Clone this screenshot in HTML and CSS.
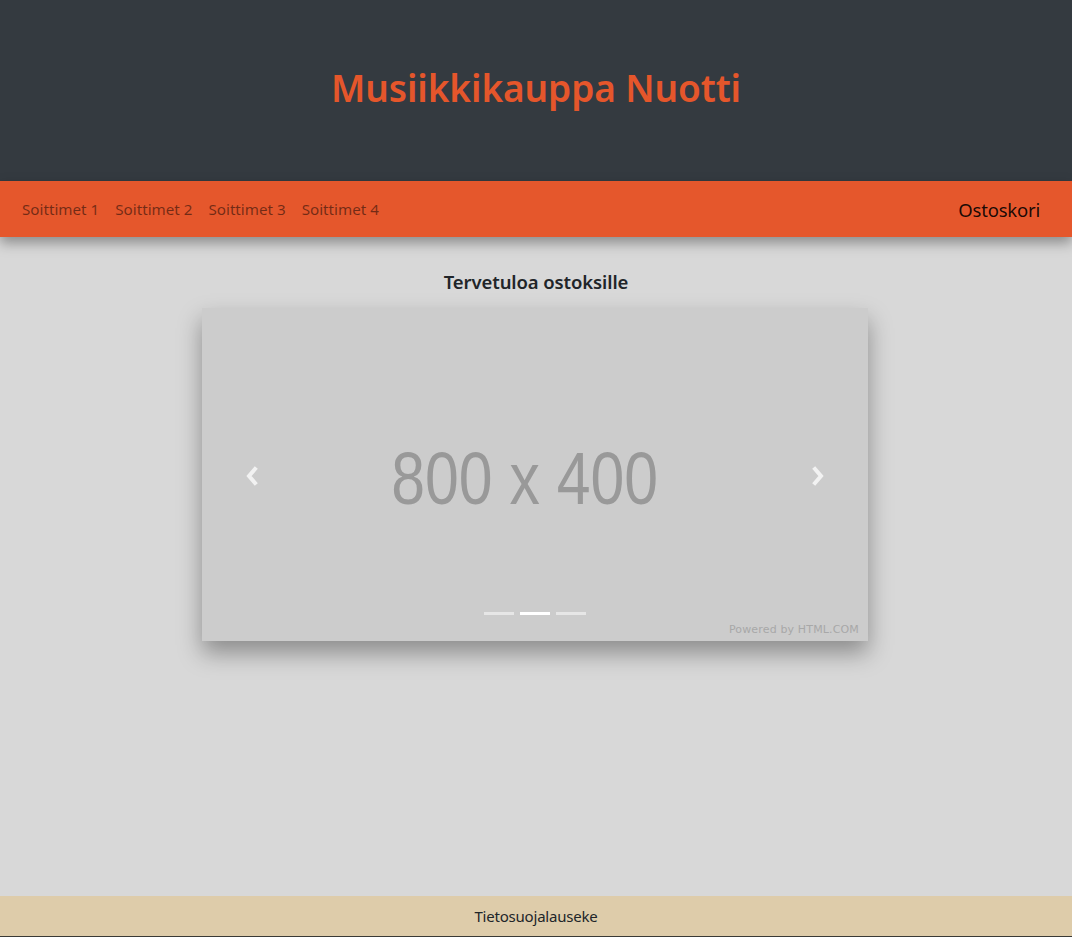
FILE: index.html
```html
<!DOCTYPE html>
<html lang="fi">
<head>
<meta charset="utf-8">
<title>Musiikkikauppa Nuotti</title>
<link rel="stylesheet" href="styles.css">
</head>
<body>
<header class="masthead">
  <h1 class="site-title">Musiikkikauppa Nuotti</h1>
</header>
<nav class="navbar">
  <ul class="nav-links">
    <li><a class="nav-link" href="#">Soittimet 1</a></li>
    <li><a class="nav-link" href="#">Soittimet 2</a></li>
    <li><a class="nav-link" href="#">Soittimet 3</a></li>
    <li><a class="nav-link" href="#">Soittimet 4</a></li>
  </ul>
  <a class="cart" href="#">Ostoskori</a>
</nav>
<main class="content">
  <h2 class="welcome">Tervetuloa ostoksille</h2>
  <div class="carousel">
    <div class="slide">
      <span class="placeholder">800 x 400</span>
    </div>
    <a class="control prev" href="#" aria-label="Edellinen">
      <svg width="14" height="20" viewBox="0 0 14 20"><path d="M10 3 L4 10 L10 17" fill="none" stroke="#f2f2f2" stroke-width="4" stroke-linecap="square"/></svg>
    </a>
    <a class="control next" href="#" aria-label="Seuraava">
      <svg width="14" height="20" viewBox="0 0 14 20"><path d="M4 3 L10 10 L4 17" fill="none" stroke="#f2f2f2" stroke-width="4" stroke-linecap="square"/></svg>
    </a>
    <ol class="indicators">
      <li class="ind"></li>
      <li class="ind active"></li>
      <li class="ind"></li>
    </ol>
    <span class="powered">Powered by HTML.COM</span>
  </div>
</main>
<footer class="footer">
  <a class="footer-link" href="#">Tietosuojalauseke</a>
</footer>
</body>
</html>
```
FILE: styles.css
```css
* { box-sizing: border-box; }
html, body { margin: 0; padding: 0; }
body {
  background: #d8d8d8;
  font-family: "Noto Sans", "Open Sans", sans-serif;
  color: #212529;
  min-height: 937px;
  display: flex;
  flex-direction: column;
}
.masthead {
  background: #343a40;
  height: 181px;
  display: flex;
  align-items: center;
  justify-content: center;
}
.site-title {
  margin: 0;
  color: #e5562b;
  font-size: 37px;
  font-weight: 600;
  letter-spacing: -0.1px;
  padding-bottom: 6px;
}
.navbar {
  background: #e5572c;
  height: 56px;
  display: flex;
  align-items: center;
  justify-content: space-between;
  padding: 0 32px 0 14px;
  box-shadow: 0 6px 12px rgba(0,0,0,0.35);
  position: relative;
  z-index: 2;
}
.nav-links {
  list-style: none;
  margin: 0;
  padding: 0;
  display: flex;
}
.nav-link {
  display: block;
  padding: 8px 8px;
  color: rgba(0,0,0,0.5);
  text-decoration: none;
  font-size: 15.2px;
  letter-spacing: 0;
}
.cart {
  color: rgba(0,0,0,0.9);
  text-decoration: none;
  font-size: 18.5px;
  letter-spacing: -0.2px;
}
.content {
  flex: 1;
  display: flex;
  flex-direction: column;
  align-items: center;
}
.welcome {
  margin: 34px 0 15px;
  font-size: 18.5px;
  font-weight: 600;
  line-height: 1.2;
  letter-spacing: -0.1px;
}
.carousel {
  position: relative;
  width: 666px;
  height: 333px;
  background: #cccccc;
  box-shadow: 0 12px 22px rgba(0,0,0,0.35);
  margin-left: -2px;
}
.slide {
  width: 100%;
  height: 100%;
  display: flex;
  align-items: center;
  justify-content: center;
}
.placeholder {
  font-family: "Liberation Sans", Arial, sans-serif;
  font-size: 75px;
  color: #999999;
  transform: translate(-10px, 3px) scaleX(0.81);
  white-space: nowrap;
}
.control {
  position: absolute;
  top: 0;
  bottom: 0;
  width: 100px;
  display: flex;
  align-items: center;
  justify-content: center;
  padding-top: 2px;
}
.prev { left: 0; }
.next { right: 0; }
.indicators {
  position: absolute;
  left: 0;
  right: 0;
  bottom: 26px;
  margin: 0;
  padding: 0;
  list-style: none;
  display: flex;
  justify-content: center;
  gap: 6px;
}
.ind {
  width: 30px;
  height: 3px;
  background: rgba(255,255,255,0.5);
}
.ind.active { background: #ffffff; }
.powered {
  position: absolute;
  right: 9px;
  bottom: 5px;
  font-family: "DejaVu Sans", sans-serif;
  font-size: 11px;
  letter-spacing: 0.15px;
  color: #a8a8a8;
}
.footer {
  background: #deccaa;
  height: 41px;
  border-bottom: 1px solid #3a3a36;
  display: flex;
  align-items: center;
  justify-content: center;
}
.footer-link {
  color: #212529;
  text-decoration: none;
  font-size: 15px;
  letter-spacing: -0.2px;
}
```
